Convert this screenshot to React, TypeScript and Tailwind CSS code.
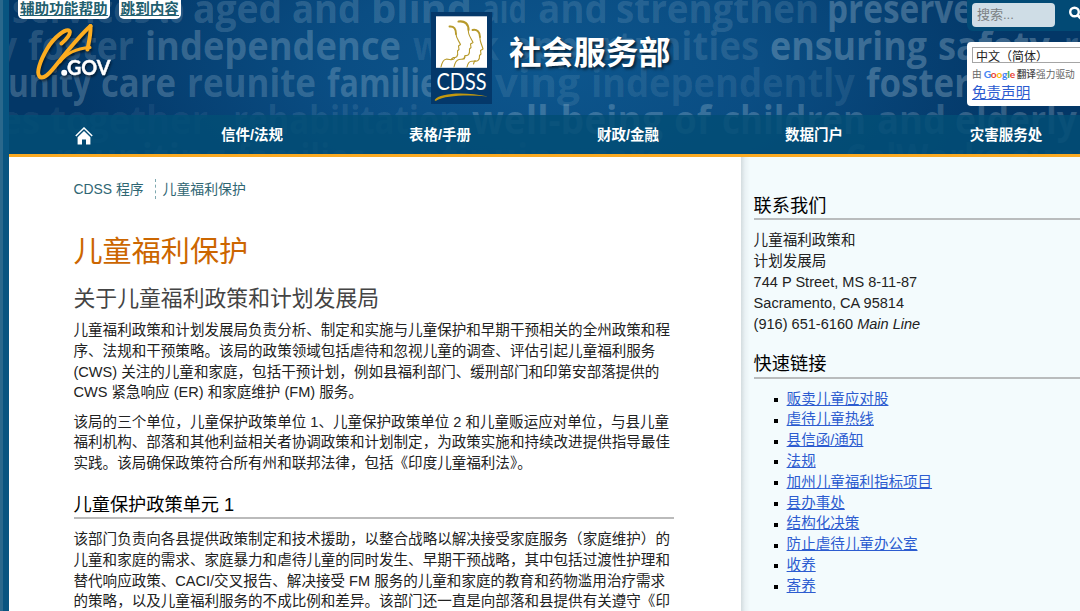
import React from "react";

type Word = [text: string, x: number, width: number, y: number, opacity: number];

const words: Word[] = [
  ["services", 12, 139, 22.5, 0.15],
  ["to", 158, 26, 22.5, 0.17],
  ["aged", 193, 89, 22.5, 0.18],
  ["and", 292, 69, 22.5, 0.18],
  ["blind", 371, 101, 22.5, 0.18],
  ["aid", 482, 45, 22.5, 0.13],
  ["and", 538, 70, 22.5, 0.13],
  ["strengthen", 616, 203, 22.5, 0.14],
  ["preserve", 827, 146, 22.5, 0.25],
  ["families", 984, 130, 22.5, 0.06],
  ["y", -3, 20, 60, 0.15],
  ["foster", 28, 106, 60, 0.18],
  ["independence", 145, 256, 60, 0.22],
  ["work", 413, 86, 60, 0.1],
  ["opportunities", 510, 249, 60, 0.13],
  ["ensuring", 770, 157, 60, 0.26],
  ["safety", 938, 112, 60, 0.26],
  ["reduce", 1064, 110, 60, 0.2],
  ["unity", 8, 83, 97, 0.24],
  ["care", 101, 75, 97, 0.24],
  ["reunite", 187, 129, 97, 0.2],
  ["families", 327, 128, 97, 0.22],
  ["living", 470, 110, 97, 0.11],
  ["independently", 591, 264, 97, 0.1],
  ["foster", 866, 104, 97, 0.26],
  ["es", 0, 40, 134, 0.08],
  ["together", 50, 158, 134, 0.08],
  ["rehabilitation", 233, 228, 134, 0.1],
  ["well-being", 472, 191, 134, 0.22],
  ["of", 674, 37, 134, 0.22],
  ["children", 722, 144, 134, 0.22],
  ["and", 877, 69, 134, 0.2],
  ["elderly", 955, 122, 134, 0.22],
  ["reuniting", 55, 170, 171.5, 0.12],
  ["families", 237, 128, 171.5, 0.12],
  ["continuing", 376, 197, 171.5, 0.1],
  ["care", 590, 75, 171.5, 0.1],
  ["CalWorks", 845, 156, 171.5, 0.14],
  ["support", 1012, 140, 171.5, 0.14],
];

const intro = [
  "儿童福利政策和计划发展局负责分析、制定和实施与儿童保护和早期干预相关的全州政策和程",
  "序、法规和干预策略。该局的政策领域包括虐待和忽视儿童的调查、评估引起儿童福利服务",
  "(CWS) 关注的儿童和家庭，包括干预计划，例如县福利部门、缓刑部门和印第安部落提供的",
  "CWS 紧急响应 (ER) 和家庭维护 (FM) 服务。",
];

const units = [
  "该局的三个单位，儿童保护政策单位 1、儿童保护政策单位 2 和儿童贩运应对单位，与县儿童",
  "福利机构、部落和其他利益相关者协调政策和计划制定，为政策实施和持续改进提供指导最佳",
  "实践。该局确保政策符合所有州和联邦法律，包括《印度儿童福利法》。",
];

const unitOne = [
  "该部门负责向各县提供政策制定和技术援助，以整合战略以解决接受家庭服务（家庭维护）的",
  "儿童和家庭的需求、家庭暴力和虐待儿童的同时发生、早期干预战略，其中包括过渡性护理和",
  "替代响应政策、CACI/交叉报告、解决接受 FM 服务的儿童和家庭的教育和药物滥用治疗需求",
  "的策略，以及儿童福利服务的不成比例和差异。该部门还一直是向部落和县提供有关遵守《印",
];

const links = [
  "贩卖儿童应对股",
  "虐待儿童热线",
  "县信函/通知",
  "法规",
  "加州儿童福利指标项目",
  "县办事处",
  "结构化决策",
  "防止虐待儿童办公室",
  "收养",
  "寄养",
];

function Lines({ lines, className = "" }: { lines: string[]; className?: string }) {
  return (
    <p className={className}>
      {lines.map((line) => (
        <span key={line} className="block whitespace-nowrap">
          {line}
        </span>
      ))}
    </p>
  );
}

function WordCloud() {
  return (
    <svg className="absolute inset-0 h-full w-full" viewBox="9 0 1071 154" preserveAspectRatio="none" aria-hidden="true">
      {words.map(([text, x, width, y, opacity]) => (
        <text
          key={`${text}-${x}-${y}`}
          x={x}
          y={y}
          textLength={width}
          lengthAdjust="spacingAndGlyphs"
          fill="#dcebf2"
          fillOpacity={opacity}
          fontSize="38.5"
          fontWeight="700"
          fontFamily="'Open Sans','Noto Sans',sans-serif"
        >
          {text}
        </text>
      ))}
    </svg>
  );
}

function CaGovLogo() {
  return (
    <svg width="82" height="62" viewBox="33 21 82 62" className="drop-shadow-[1px_2px_1px_rgba(0,0,0,0.5)]">
      <g fill="none" stroke="#fdad20" strokeLinecap="round" strokeLinejoin="round">
        <path strokeWidth="4" d="M61.5 43.5C67 39 71 33.500 69.5 31C66 28 54 37 47 49C40 61 36 73 39.5 76.500C43 80 49 74 55 66.5C65 54 79 36 90.5 26" />
        <path strokeWidth="4" d="M90.5 26C91 34 89 41 87.5 49.500" />
        <path strokeWidth="3" d="M60 62C66 53 77 48.500 90 47.500" />
      </g>
      <circle cx="64.200" cy="72.800" r="3" fill="#fff" />
      <text x="67" y="75" textLength="43.500" lengthAdjust="spacingAndGlyphs" fontSize="20" fontWeight="700" fill="#fff" stroke="#fff" strokeWidth="0.400" fontFamily="Lato,sans-serif">
        GOV
      </text>
    </svg>
  );
}

function CdssLogo() {
  return (
    <svg width="61" height="92" viewBox="431 12 61 92">
      <rect x="431" y="12" width="61" height="92" fill="#04386a" />
      <rect x="436" y="16.300" width="51" height="51.500" fill="#fff" />
      <g fill="none" stroke="#b79a2b" strokeWidth="1.100" strokeLinecap="round" strokeLinejoin="round">
        <path strokeWidth="1.900" d="M449.500 26.500C454 26 456 29 456 34" />
        <path d="M456 34C456 38 459 41 460.500 44.500L458.500 46L459 49.500L457.500 51C458.500 57 456 58 453.500 57.500L451.500 59" />
        <path d="M441 67C442 62.500 443.500 59.500 446 59.200C449 58.800 453 61 454.500 58.500" />
        <path strokeWidth="2.100" d="M458.500 21.500C465 20.500 468.500 24 468.500 30" />
        <path d="M468.500 30C467.500 34 471 38 473 42.500L470.500 44L471 47.500L469.500 49C470 55 468 56 465 55.500L464 59" />
        <path d="M454 67C455 62.500 456 60 459 59.500C462 59 464 60 465 57" />
        <path strokeWidth="1.900" d="M472.500 30C477 29 480 32 480 37" />
        <path d="M480 37C479.500 41 482 45 483 49L480.500 50.500L481 54L479.500 55.500C480 60.500 477 61.500 474.500 61L473.500 64" />
        <path d="M467 67C468 62.500 469.500 61 472 61.200L475.500 61" />
      </g>
      <text x="436.500" y="89.600" textLength="50" lengthAdjust="spacingAndGlyphs" fontSize="23" fill="#fff" fontFamily="Lato,sans-serif">
        CDSS
      </text>
      <path d="M435 99.500C439 93.500 463 91 488 96.500C467 94.700 445 95.500 436.500 100.500C435.300 101.200 434.300 100.500 435 99.500Z" fill="#c2980f" />
    </svg>
  );
}

function GoogleWord() {
  return (
    <span className="mx-[2px] inline-block w-[31px] font-[Lato] text-[10.200px] font-bold tracking-[-0.200px]">
      <span className="text-[#4285f4]">G</span>
      <span className="text-[#ea4335]">o</span>
      <span className="text-[#fbbc05]">o</span>
      <span className="text-[#4285f4]">g</span>
      <span className="text-[#34a853]">l</span>
      <span className="text-[#ea4335]">e</span>
    </span>
  );
}

export default function App() {
  return (
    <div className="flex h-[611px] w-[1080px] overflow-hidden bg-[#085480] font-['Liberation_Sans','Noto_Sans_CJK_SC',sans-serif] text-[14.56px] leading-[20.8px] text-[#222]">
      <div className="w-[3px] shrink-0 bg-[#2a688c]" />
      <div className="w-[6px] shrink-0 bg-[#085480]" />
      <div className="flex w-[1071px] shrink-0 flex-col">
        <header className="relative h-[157px] shrink-0 overflow-hidden border-b-[3px] border-[#fbaa22] bg-[radial-gradient(ellipse_480px_230px_at_50%_45%,#0d568d_0%,#0a4d83_45%,#033767_100%)]">
          <WordCloud />
          <div className="relative flex h-[115px]">
            <div className="w-[422px] shrink-0">
              <div className="flex gap-[9px] pl-[9px] text-[14.6px] leading-[18px] font-bold text-[#23606f] underline">
                <a className="h-[19px] rounded-b-[5px] bg-white px-[2px]">辅助功能帮助</a>
                <a className="h-[19px] rounded-b-[5px] bg-white px-[2px]">跳到内容</a>
              </div>
              <div className="pt-[2px] pl-[24px]">
                <CaGovLogo />
              </div>
            </div>
            <div className="flex w-[536px] shrink-0 pt-3">
              <CdssLogo />
              <h1 className="pt-[18px] pl-[17px] text-[32.300px] leading-[46px] font-bold text-white [text-shadow:2px_2px_3px_rgba(0,0,0,0.6)]">
                社会服务部
              </h1>
            </div>
            <div className="w-[113px] shrink-0">
              <div className="flex h-[31px] items-start gap-[13px] rounded-bl-md bg-[#024a75] pt-[3px] pl-[5px]">
                <div className="h-[24px] w-[83px] shrink-0 rounded-[4px] bg-[#cfdde6] pl-[5px] text-[13px] leading-[23px] text-[#7b8083]">搜索...</div>
                <svg width="17" height="20" viewBox="0 0 17 20" className="shrink-0" fill="none" stroke="#fff" strokeLinecap="round">
                  <circle cx="6.500" cy="9" r="4.300" strokeWidth="2.400" />
                  <path d="M10 12.500L14 16.500" strokeWidth="3" />
                </svg>
              </div>
              <div className="mt-[11px] h-[64px] overflow-hidden rounded-l-[4px] bg-white pt-[5px] pl-[5px] whitespace-nowrap">
                <div className="h-[16px] w-[130px] overflow-hidden border border-[#a5a5a5] pl-[3px] text-[12px] leading-[18px]">中文（简体）</div>
                <div className="flex h-[22px] items-center text-[9.700px] leading-[21px] text-[#666]">
                  由<GoogleWord />
                  <span className="font-medium text-[#444]">翻译</span>强力驱动
                </div>
                <a className="block leading-[16px] text-[#2c5cd0] underline">免责声明</a>
              </div>
            </div>
          </div>
          <nav className="relative flex h-[39px] items-center bg-[#024e75]/85 pt-[2px] text-center text-[14.500px] font-bold text-white">
            <div className="flex w-[149px] shrink-0 justify-center">
              <svg width="18" height="18" viewBox="0 0 18 18">
                <path d="M0.800 9L9 1L17.200 9" fill="none" stroke="#fff" strokeWidth="1.500" />
                <path d="M2.600 10.200L9 4L15.400 10.200V17.500H11V12.500H7V17.500H2.600Z" fill="#fff" />
              </svg>
            </div>
            <a className="w-[188px] shrink-0">信件/法规</a>
            <a className="w-[188px] shrink-0">表格/手册</a>
            <a className="w-[188px] shrink-0">财政/金融</a>
            <a className="w-[184px] shrink-0">数据门户</a>
            <a className="w-[200px] shrink-0">灾害服务处</a>
          </nav>
        </header>

        <div className="flex h-[454px]">
          <main className="w-[732px] shrink-0 overflow-hidden bg-white pt-[22px] pl-[64.500px]">
            <div className="flex h-[20px] items-center text-[13.900px] text-[#2f6673]">
              <a className="w-[81px] whitespace-nowrap">CDSS 程序</a>
              <a className="flex h-[20px] items-center border-l border-dashed border-[#7fa9b0] pl-[7px]">儿童福利保护</a>
            </div>
            <h1 className="mt-[33px] h-[40px] text-[29.100px] leading-[40px] text-[#cc6600]">儿童福利保护</h1>
            <h2 className="mt-[12px] h-[30px] text-[21.840px] leading-[30px] text-[#444]">关于儿童福利政策和计划发展局</h2>
            <Lines lines={intro} className="mt-[6px]" />
            <Lines lines={units} className="mt-[8.400px]" />
            <h3 className="mt-[18px] h-[27px] w-[600px] border-b-2 border-[#bbb] text-[18.200px] leading-[26px] text-black">儿童保护政策单元 1</h3>
            <Lines lines={unitOne} className="mt-[10px]" />
          </main>

          <aside className="w-[339px] shrink-0 overflow-hidden bg-[linear-gradient(90deg,#d3dcdf_0px,#e9f1f4_4px,#f3fbfd_9px)] pt-[35px] pl-[12.600px]">
            <h3 className="h-[28px] border-b-2 border-[#b9bcbd] text-[18.200px] leading-[29px] text-black">联系我们</h3>
            <p className="mt-[10.400px]">
              儿童福利政策和
              <br />
              计划发展局
              <br />
              744 P Street, MS 8-11-87
              <br />
              Sacramento, CA 95814
              <br />
              (916) 651-6160 <em>Main Line</em>
            </p>
            <h3 className="mt-[16.600px] h-[28px] border-b-2 border-[#b9bcbd] text-[18.200px] leading-[27px] text-black">快速链接</h3>
            <ul className="mt-[9.600px]">
              {links.map((link) => (
                <li key={link} className="flex h-[20.800px] items-center">
                  <span className="mt-[2px] mr-[9px] ml-[20px] h-[4px] w-[4px] bg-black" />
                  <a className="text-[#2c5cd0] underline">{link}</a>
                </li>
              ))}
            </ul>
          </aside>
        </div>
      </div>
    </div>
  );
}
